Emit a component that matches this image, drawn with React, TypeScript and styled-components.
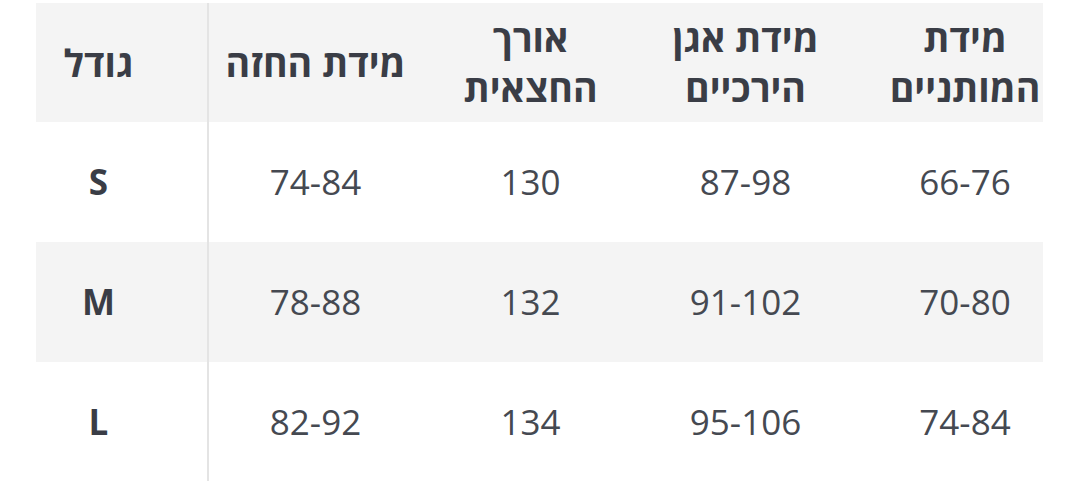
import React from "react";
import styled, { createGlobalStyle } from "styled-components";

const Global = createGlobalStyle`
  html, body { margin: 0; padding: 0; background: #ffffff; }
  body { font-family: "Open Sans", "DejaVu Sans", sans-serif; }
`;

const Page = styled.div`
  padding: 3px 0 0 36px;
  width: 1080px;
  height: 481px;
  box-sizing: border-box;
  overflow: hidden;
`;

const Scroller = styled.div`
  width: 1007px;
  overflow: hidden;
`;

const Row = styled.div<{ $shaded?: boolean; $head?: boolean }>`
  display: grid;
  grid-template-columns: 172px 215px 215px 215px 224px;
  width: 1041px;
  height: ${(p) => (p.$head ? "119px" : "120px")};
  background: ${(p) => (p.$shaded ? "#f4f4f4" : "#ffffff")};
`;

const Cell = styled.div<{ $head?: boolean }>`
  display: flex;
  align-items: center;
  justify-content: center;
  direction: rtl;
  text-align: center;
  font-size: ${(p) => (p.$head ? "37.5px" : "35px")};
  line-height: 50px;
  font-weight: ${(p) => (p.$head ? 700 : 400)};
  color: ${(p) => (p.$head ? "#3a3d46" : "#454951")};
`;

const SizeCell = styled(Cell)`
  font-weight: 700;
  color: #3a3d46;
  padding-right: 46px;
  border-right: 2px solid #e4e4e4;
  margin-right: -1px;
`;

const SizeLetter = styled.span`
  font-size: 35px;
`;

const headers = [
  ["מידת החזה"],
  ["אורך", "החצאית"],
  ["מידת אגן", "הירכיים"],
  ["מידת", "המותניים"],
];

const rows = [
  { size: "S", values: ["74-84", "130", "87-98", "66-76"] },
  { size: "M", values: ["78-88", "132", "91-102", "70-80"] },
  { size: "L", values: ["82-92", "134", "95-106", "74-84"] },
];

export default function App() {
  return (
    <>
      <Global />
      <Page>
        <Scroller>
          <Row $head $shaded>
            <SizeCell $head>גודל</SizeCell>
            {headers.map((lines, i) => (
              <Cell $head key={i}>
                <div>
                  {lines.map((l, j) => (
                    <div key={j}>{l}</div>
                  ))}
                </div>
              </Cell>
            ))}
          </Row>
          {rows.map((r, i) => (
            <Row key={r.size} $shaded={i % 2 === 1}>
              <SizeCell>
                <SizeLetter>{r.size}</SizeLetter>
              </SizeCell>
              {r.values.map((v, j) => (
                <Cell key={j}>{v}</Cell>
              ))}
            </Row>
          ))}
        </Scroller>
      </Page>
    </>
  );
}
